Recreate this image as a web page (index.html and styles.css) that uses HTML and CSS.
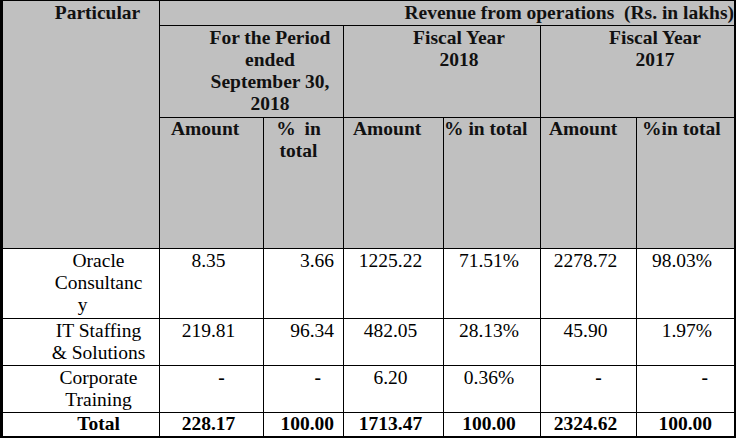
FILE: index.html
```html
<!DOCTYPE html>
<html>
<head>
<meta charset="utf-8">
<title>Revenue from operations</title>
<link rel="stylesheet" href="styles.css">
</head>
<body>
<div class="sheet">
  <div class="c h particular">Particular</div>
  <div class="c h revenue">Revenue from operations&nbsp; (Rs. in lakhs)</div>

  <div class="c h period">For the Period<br>ended<br>September 30,<br>2018</div>
  <div class="c h fy18">Fiscal Year<br>2018</div>
  <div class="c h fy17">Fiscal Year<br>2017</div>

  <div class="c h sub amt1">Amount</div>
  <div class="c h sub pct1">% in<br>total</div>
  <div class="c h sub amt2">Amount</div>
  <div class="c h sub pct2">% in total</div>
  <div class="c h sub amt3">Amount</div>
  <div class="c h sub pct3">%in total</div>

  <div class="c d name">Oracle<br>Consultanc<br><span class="tail">y</span></div>
  <div class="c d num">8.35</div>
  <div class="c d rnum">3.66</div>
  <div class="c d num">1225.22</div>
  <div class="c d num">71.51%</div>
  <div class="c d num">2278.72</div>
  <div class="c d rnum2">98.03%</div>

  <div class="c d name">IT Staffing<br>&amp; Solutions</div>
  <div class="c d num">219.81</div>
  <div class="c d rnum">96.34</div>
  <div class="c d num">482.05</div>
  <div class="c d num">28.13%</div>
  <div class="c d num">45.90</div>
  <div class="c d rnum2">1.97%</div>

  <div class="c d name">Corporate<br>Training</div>
  <div class="c d num dash">-</div>
  <div class="c d rnum dash dashr">-</div>
  <div class="c d num">6.20</div>
  <div class="c d num">0.36%</div>
  <div class="c d num dash">-</div>
  <div class="c d rnum2 dash dashr2">-</div>

  <div class="c t name">Total</div>
  <div class="c t num">228.17</div>
  <div class="c t rnum">100.00</div>
  <div class="c t num">1713.47</div>
  <div class="c t num">100.00</div>
  <div class="c t num">2324.62</div>
  <div class="c t rnum2">100.00</div>
</div>
</body>
</html>
```

FILE: styles.css
```css
html, body {
  margin: 0;
  padding: 0;
  background: #fff;
}

.sheet {
  display: grid;
  grid-template-columns: 157px 104px 80px 100px 97px 96px 98px;
  grid-template-rows: 25px 92px 131px 70px 47px 47px 24px;
  width: max-content;
  border-left: 3px solid #000;
  border-top: 1px solid #000;
  border-right: 1px solid #000;
  border-bottom: 1px solid #000;
  font-family: "Liberation Serif", "Times New Roman", serif;
  font-size: 19.5px;
  line-height: 22px;
  color: #000;
}

.c {
  box-sizing: border-box;
  border-right: 1px solid #000;
  border-bottom: 1px solid #000;
  white-space: nowrap;
  padding-top: 1px;
}

.h {
  background: #c0c0c0;
  font-weight: bold;
  color: #111;
}

.particular {
  grid-row: 1 / span 3;
  text-align: center;
  padding-left: 36px;
  padding-right: 3px;
}

.revenue {
  grid-column: 2 / span 6;
  text-align: right;
  padding-right: 0;
}

.period {
  grid-column: 2 / span 2;
  text-align: center;
  padding-left: 40px;
  padding-right: 3px;
}

.fy18 {
  grid-column: 4 / span 2;
  text-align: center;
  padding-left: 36px;
  padding-right: 2px;
}

.fy17 {
  grid-column: 6 / span 2;
  text-align: center;
  padding-left: 37px;
  padding-right: 2px;
}

.sub {
  padding-top: 0;
}

.amt1 { padding-left: 11px; }
.pct1 { text-align: center; padding-left: 0; padding-right: 10px; word-spacing: 4px; }
.amt2 { padding-left: 9px; }
.pct2 { padding-left: 0; }
.amt3 { padding-left: 8px; }
.pct3 { padding-left: 5px; }

.d {
  background: #fff;
}

.t {
  background: #fff;
  font-weight: bold;
  padding-top: 0;
}

.name {
  text-align: center;
  padding-left: 37px;
  padding-right: 2px;
}

.tail {
  margin-right: 32px;
}

.num {
  text-align: center;
  padding-right: 6px;
}

.rnum {
  text-align: right;
  padding-right: 9px;
}

.rnum2 {
  text-align: right;
  padding-right: 22px;
}

.dash { font-weight: bold; padding-left: 20px; padding-right: 0; }
.dashr { padding-left: 0; padding-right: 22px; }
.dashr2 { padding-left: 0; padding-right: 26px; }
```
